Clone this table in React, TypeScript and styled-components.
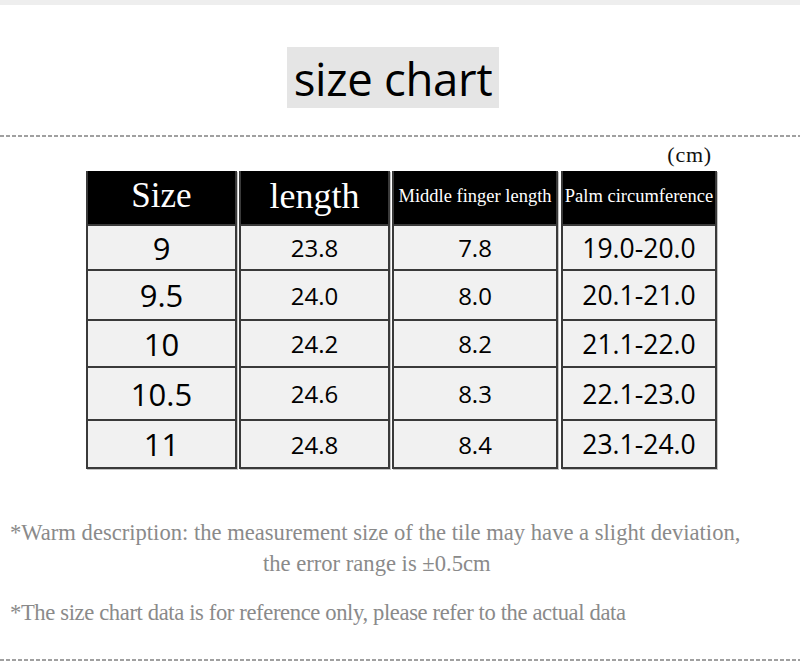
import styled, { createGlobalStyle } from "styled-components";

const GlobalStyle = createGlobalStyle`
  html, body {
    margin: 0;
    padding: 0;
    background: #ffffff;
  }
`;

const serif = `"Liberation Serif", "Times New Roman", serif`;
const sans = `"Open Sans", "Noto Sans", sans-serif`;

const Page = styled.div`
  width: 800px;
  height: 661px;
  display: flex;
  flex-direction: column;
  overflow: hidden;
  border-top: 5px solid #eeeeee;
  box-sizing: border-box;
`;

const TitleRow = styled.div`
  display: flex;
  padding: 42px 0 0 287px;
`;

const Title = styled.div`
  width: 212px;
  height: 61px;
  background: #e5e5e5;
  display: flex;
  align-items: center;
  justify-content: center;
  font-family: ${sans};
  font-size: 45.5px;
  color: #000;
  letter-spacing: -0.3px;
`;

const Dashed = styled.div<{ $top: number }>`
  margin-top: ${(p) => p.$top}px;
  height: 2px;
  flex-shrink: 0;
  background: repeating-linear-gradient(
    to right,
    #a0a0a0 0 4px,
    transparent 4px 6px
  );
`;

const Unit = styled.div`
  align-self: flex-end;
  margin: 4px 88px 0 0;
  height: 31px;
  line-height: 28px;
  font-family: ${serif};
  font-size: 22px;
  letter-spacing: 0.8px;
  color: #111;
`;

const Table = styled.div`
  display: flex;
  margin-left: 86px;
`;

const Column = styled.div<{ $w: number; $gap: number }>`
  width: ${(p) => p.$w}px;
  margin-left: ${(p) => p.$gap}px;
  box-sizing: border-box;
  display: flex;
  flex-direction: column;
  border: 2px solid #3a3a3a;
  border-top: none;
  box-shadow: 1px 1px 0 #c4c4c4;
`;

const Head = styled.div<{ $fs: number }>`
  height: 53px;
  background: #000;
  color: #fff;
  display: flex;
  align-items: center;
  justify-content: center;
  padding-bottom: 3px;
  box-sizing: border-box;
  font-family: ${serif};
  font-size: ${(p) => p.$fs}px;
  white-space: nowrap;
`;

const Cell = styled.div<{ $h: number; $fs: number }>`
  height: ${(p) => p.$h}px;
  background: #f1f1f1;
  border-top: 2px solid #3a3a3a;
  box-sizing: border-box;
  display: flex;
  align-items: center;
  justify-content: center;
  font-family: ${sans};
  font-size: ${(p) => p.$fs}px;
  color: #000;
`;

const Notes = styled.div`
  margin-top: 49px;
  font-family: ${serif};
  font-size: 22.6px;
  line-height: 30px;
  color: #8a8a8a;
  display: flex;
  flex-direction: column;
`;

const NoteLine = styled.div<{ $indent: number; $gap?: number; $track?: number }>`
  padding-left: ${(p) => p.$indent}px;
  margin-top: ${(p) => p.$gap ?? 0}px;
  letter-spacing: ${(p) => p.$track ?? 0}px;
  white-space: nowrap;
`;

const rowHeights = [45, 50, 47, 53, 48];

const columns = [
  { title: "Size", fs: 35, w: 151, gap: 0, dataFs: 31, values: ["9", "9.5", "10", "10.5", "11"] },
  { title: "length", fs: 36, w: 151, gap: 2, dataFs: 24, values: ["23.8", "24.0", "24.2", "24.6", "24.8"] },
  { title: "Middle finger length", fs: 18.5, w: 166, gap: 2, dataFs: 24, values: ["7.8", "8.0", "8.2", "8.3", "8.4"] },
  { title: "Palm circumference", fs: 18.5, w: 156, gap: 3, dataFs: 26.5, values: ["19.0-20.0", "20.1-21.0", "21.1-22.0", "22.1-23.0", "23.1-24.0"] },
];

export default function App() {
  return (
    <Page>
      <GlobalStyle />
      <TitleRow>
        <Title>size chart</Title>
      </TitleRow>
      <Dashed $top={27} />
      <Unit>(cm)</Unit>
      <Table>
        {columns.map((col) => (
          <Column key={col.title} $w={col.w} $gap={col.gap}>
            <Head $fs={col.fs}>{col.title}</Head>
            {col.values.map((v, i) => (
              <Cell key={v} $h={rowHeights[i]} $fs={col.dataFs}>
                {v}
              </Cell>
            ))}
          </Column>
        ))}
      </Table>
      <Notes>
        <NoteLine $indent={10}>*Warm description: the measurement size of the tile may have a slight deviation,</NoteLine>
        <NoteLine $indent={263} $gap={1}>the error range is ±0.5cm</NoteLine>
        <NoteLine $indent={10} $gap={19} $track={-0.37}>*The size chart data is for reference only, please refer to the actual data</NoteLine>
      </Notes>
      <Dashed $top={31} />
    </Page>
  );
}
